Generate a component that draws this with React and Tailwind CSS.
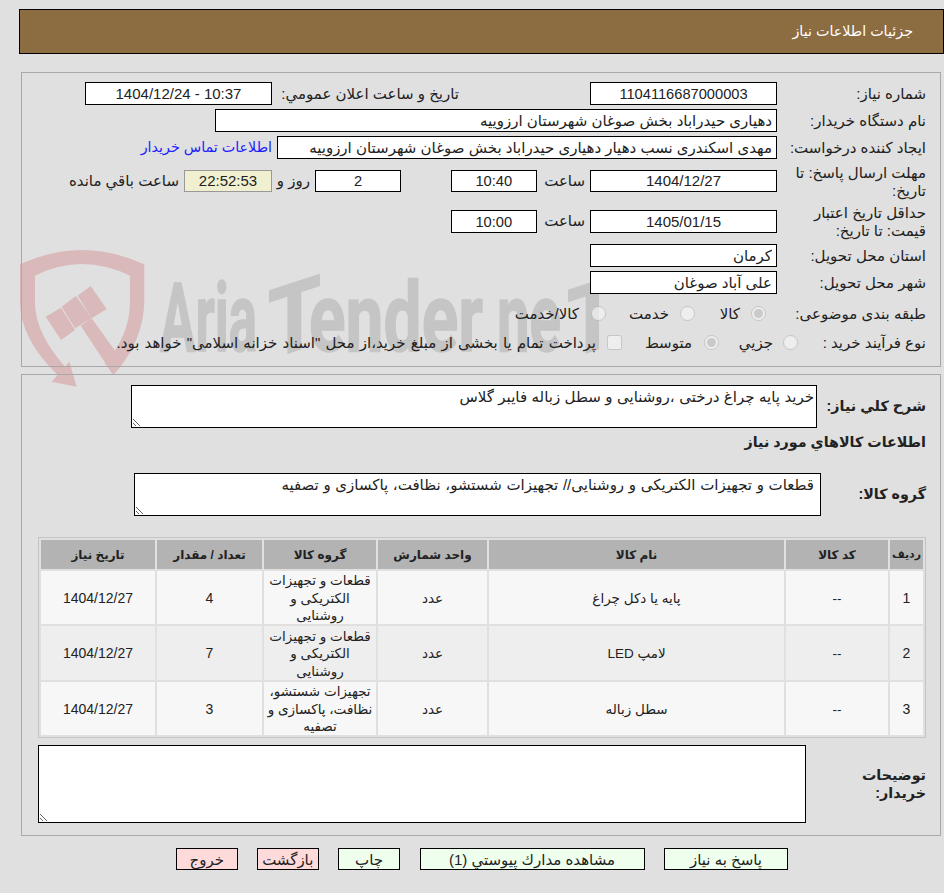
function Label({ children, className = "w-[149px] pt-px" }) {
  return <div className={`${className} shrink-0 leading-[18px] text-[#222]`}>{children}</div>;
}

function Field({ value, className = "w-[187px]", align = "text-center", dir = "rtl" }) {
  return <input readOnly value={value} dir={dir} className={`${className} h-[23px] shrink-0 border border-black bg-white px-1 ${align} outline-none`} />;
}

function Note({ value, className, padding = "p-0.5" }) {
  return <textarea readOnly dir="rtl" value={value} className={`${className} block shrink-0 resize border border-black bg-white ${padding} leading-[18px] outline-none`} />;
}

function Radio({ checked, name }) {
  return <input type="radio" disabled name={name} defaultChecked={checked} className="m-0 h-[15px] w-[15px] shrink-0" />;
}

const rows = [
  ["1", "--", "پایه یا دکل چراغ", "عدد", "قطعات و تجهیزات الکتریکی و روشنایی", "4", "1404/12/27", "bg-[#f7f7f7]", "h-[53px]"],
  ["2", "--", "لامپ LED", "عدد", "قطعات و تجهیزات الکتریکی و روشنایی", "7", "1404/12/27", "bg-[#eeeeee]", "h-[54px]"],
  ["3", "--", "سطل زباله", "عدد", "تجهیزات شستشو، نظافت، پاکسازی و تصفیه", "3", "1404/12/27", "bg-[#f7f7f7]", "h-[53px]"],
];

const heads = ["رديف", "کد کالا", "نام کالا", "واحد شمارش", "گروه کالا", "تعداد / مقدار", "تاریخ نیاز"];

// watermark pieces: text, left x, width
const mark = [
  ["Aria", 160, 97],
  ["ender", 309, 174],
  ["ne", 497, 64],
];

function Watermark() {
  return (
    <svg className="pointer-events-none absolute left-0 top-0" width="944" height="893">
      <g transform="translate(10 235) scale(0.3333)" fill="#d9b9b9">
        <path d="M30 88 Q215 2 403 88 L403 200 Q400 320 310 420 L285 385 Q360 300 360 200 L360 122 Q215 52 75 122 L75 210 Q80 300 165 395 L178 380 L200 455 L125 440 L143 420 Q30 310 30 200 Z" />
        <path d="M107 245 L153 218 L195 285 L153 315 Z" />
        <path d="M155 215 L198 183 L245 250 L195 280 Z" />
        <path d="M203 182 L242 153 L290 222 L245 250 Z" />
        <path d="M212 272 L245 250 L335 375 L310 420 Z" />
      </g>
      <g fontFamily="Roboto" fontWeight="700" fontSize="96" fill="#c5c5c5" stroke="#c5c5c5" strokeWidth="1.5">
        {mark.map(([t, x, w]) => (
          <text key={t} x={x} y="351" textLength={w} lengthAdjust="spacingAndGlyphs">{t}</text>
        ))}
        <text x="268" y="351" textLength="53" lengthAdjust="spacingAndGlyphs" transform="translate(294 351) skewY(-18) translate(-294 -351)">T</text>
        <text x="567" y="351" textLength="51" lengthAdjust="spacingAndGlyphs" transform="translate(592 351) skewY(-18) translate(-592 -351)">T</text>
      </g>
    </svg>
  );
}

export default function App() {
  return (
    <div className="relative min-h-screen overflow-hidden bg-[#e0e0e0] pt-[9px] font-['Liberation_Sans','DejaVu_Sans',sans-serif] text-[15px] text-[#222]">
      <Watermark />

      <div dir="rtl" className="relative">
        <div className="ml-[19px] flex h-[45px] items-center border border-black bg-[#8c6c41] pr-[30px] text-[14.3px] text-white">
          جزئیات اطلاعات نیاز
        </div>

        {/* main info */}
        <div className="ml-[21px] mr-[3px] mt-[18px] border border-[#a8a8a8] pb-[13px] pr-[14px] pt-[9px]">
          <div className="flex items-center">
            <Label>شماره نیاز:</Label>
            <Field value="1104116687000003" className="w-[187px] text-[14.67px]" />
            <div className="w-[318px] shrink-0 pr-[131px] pt-px leading-[18px]">تاريخ و ساعت اعلان عمومي:</div>
            <Field value="1404/12/24 - 10:37" dir="ltr" className="w-[187px]" />
          </div>
          <div className="mt-1 flex items-center">
            <Label>نام دستگاه خریدار:</Label>
            <Field value="دهیاری حیدراباد بخش صوغان شهرستان ارزوییه" className="w-[562px]" align="text-right" />
          </div>
          <div className="mt-1 flex items-center">
            <Label>ایجاد کننده درخواست:</Label>
            <Field value="مهدی اسکندری نسب دهیار دهیاری حیدراباد بخش صوغان شهرستان ارزوییه" className="w-[500px]" align="text-right" />
            <a className="mr-[5px] text-[14.3px] text-[#2020ff]">اطلاعات تماس خریدار</a>
          </div>
          <div className="mt-[5px] flex h-9 items-start">
            <Label className="w-[149px]">مهلت ارسال پاسخ: تا تاریخ:</Label>
            <div className="mt-1.5 flex h-[22px] items-center">
              <Field value="1404/12/27" className="!h-[22px] w-[187px]" />
              <span className="w-[53px] shrink-0 pr-[5px]">ساعت</span>
              <Field value="10:40" className="!h-[22px] w-[86.5px] text-[14.67px]" />
              <div className="w-[49.5px] shrink-0" />
              <Field value="2" className="!h-[22px] w-[86px] text-[14.67px]" />
              <span className="w-[43px] shrink-0 pr-[5px]">روز و</span>
              <input readOnly value="22:52:53" className="h-[22px] w-[88px] shrink-0 border border-[#999] bg-[#f0f0d0] text-center outline-none" />
              <span className="mr-[5px]">ساعت باقي مانده</span>
            </div>
          </div>
          <div className="mt-1 flex h-9 items-start">
            <Label className="w-[149px]">حداقل تاریخ اعتبار قیمت: تا تاریخ:</Label>
            <div className="mt-1.5 flex h-[23px] items-center">
              <Field value="1405/01/15" className="w-[187px]" />
              <span className="w-[53px] shrink-0 pr-[5px]">ساعت</span>
              <Field value="10:00" className="w-[86.5px] text-[14.67px]" />
            </div>
          </div>
          <div className="mt-1 flex items-center">
            <Label>استان محل تحویل:</Label>
            <Field value="کرمان" align="text-right" />
          </div>
          <div className="mt-1 flex items-center">
            <Label>شهر محل تحویل:</Label>
            <Field value="علی آباد صوغان" align="text-right" />
          </div>
          <div className="mt-2 flex h-[22px] items-center">
            <Label className="w-[160px] pt-0.5">طبقه بندی موضوعی:</Label>
            <Radio checked name="cat" />
            <span className="mr-[11px] w-[45px] pt-0.5">کالا</span>
            <Radio name="cat" />
            <span className="mr-[11px] w-[63px] pt-0.5">خدمت</span>
            <Radio name="cat" />
            <span className="mr-[12px] pt-0.5">کالا/خدمت</span>
          </div>
          <div className="mt-[7px] flex h-[22px] items-center">
            <Label className="w-[128px] pt-0.5">نوع فرآیند خرید :</Label>
            <Radio name="type" />
            <span className="mr-[10px] w-[54px] pt-[3px]">جزيي</span>
            <Radio checked name="type" />
            <span className="mr-[12px] w-[70px] pt-[3px]">متوسط</span>
            <input type="checkbox" disabled className="m-0 h-[15px] w-[15px] shrink-0" />
            <span className="mr-[11px] pt-[3px] [word-spacing:1px]">پرداخت تمام یا بخشی از مبلغ خرید،از محل "اسناد خزانه اسلامی" خواهد بود.</span>
          </div>
        </div>

        {/* goods */}
        <div className="ml-[21px] mr-[3px] mt-[7px] border border-[#a8a8a8] pb-[12px] pr-[14px] pt-[10px]">
          <div className="flex items-center">
            <div className="w-[109px] shrink-0 text-[14.3px] font-bold">شرح كلي نياز:</div>
            <Note value="خرید پایه چراغ درختی ،روشنایی و سطل زباله فایبر گلاس" className="h-[43px] w-[686px] [word-spacing:0.3px]" />
          </div>
          <div className="mt-[5px] flex h-5 items-center text-[14.3px] font-bold">اطلاعات كالاهاي مورد نياز</div>
          <div className="mt-5 flex items-center">
            <div className="w-[105px] shrink-0 text-[14.3px] font-bold">گروه کالا:</div>
            <Note value="قطعات و تجهیزات الکتریکی و روشنایی// تجهیزات شستشو، نظافت، پاکسازی و تصفیه" className="h-[43px] w-[687px] [word-spacing:0.5px]" padding="px-1.5 py-0.5" />
          </div>

          <table className="mt-[21px] w-[888px] table-fixed border-separate border-spacing-[2px] border border-[#c4c4c4] text-center text-[13.5px]">
            <colgroup>
              <col className="w-[33px]" />
              <col className="w-[102px]" />
              <col className="w-[295px]" />
              <col className="w-[109px]" />
              <col className="w-[112px]" />
              <col className="w-[105px]" />
              <col className="w-[114px]" />
            </colgroup>
            <thead>
              <tr>
                {heads.map((h, i) => (
                  <th key={h} className={`h-[29px] bg-[#b3b3b3] p-0 font-bold ${i === 0 ? "text-[11px]" : "text-[12px]"}`}>{h}</th>
                ))}
              </tr>
            </thead>
            <tbody>
              {rows.map((r) => (
                <tr key={r[0]} className={r[7]}>
                  {r.slice(0, 7).map((c, i) => (
                    <td key={i} className={`${r[8]} p-0 leading-[17.5px] ${i === 0 || i >= 5 ? "text-[14px]" : ""} ${i === 4 ? "px-[2px]" : ""}`}>
                      <div className="translate-y-px">{c}</div>
                    </td>
                  ))}
                </tr>
              ))}
            </tbody>
          </table>

          <div className="mt-[7px] flex items-center">
            <div className="w-[120px] shrink-0 pl-[30px] text-[14.3px] font-bold leading-[18px]">توضیحات خریدار:</div>
            <Note value="" className="h-[78px] w-[768px]" />
          </div>
        </div>

        <div className="mr-[156px] mt-3 flex gap-[19.5px]">
          <button className="h-[22px] w-[124px] border border-black bg-[#eeffee]">پاسخ به نیاز</button>
          <button className="h-[22px] w-[225px] border border-black bg-[#eeffee]">مشاهده مدارك پيوستي (1)</button>
          <button className="h-[22px] w-[62px] border border-black bg-[#eeffee]">چاپ</button>
          <button className="h-[22px] w-[61.5px] border border-black bg-[#ffdada]">بازگشت</button>
          <button className="h-[22px] w-[61.5px] border border-black bg-[#ffdada]">خروج</button>
        </div>
      </div>
    </div>
  );
}
